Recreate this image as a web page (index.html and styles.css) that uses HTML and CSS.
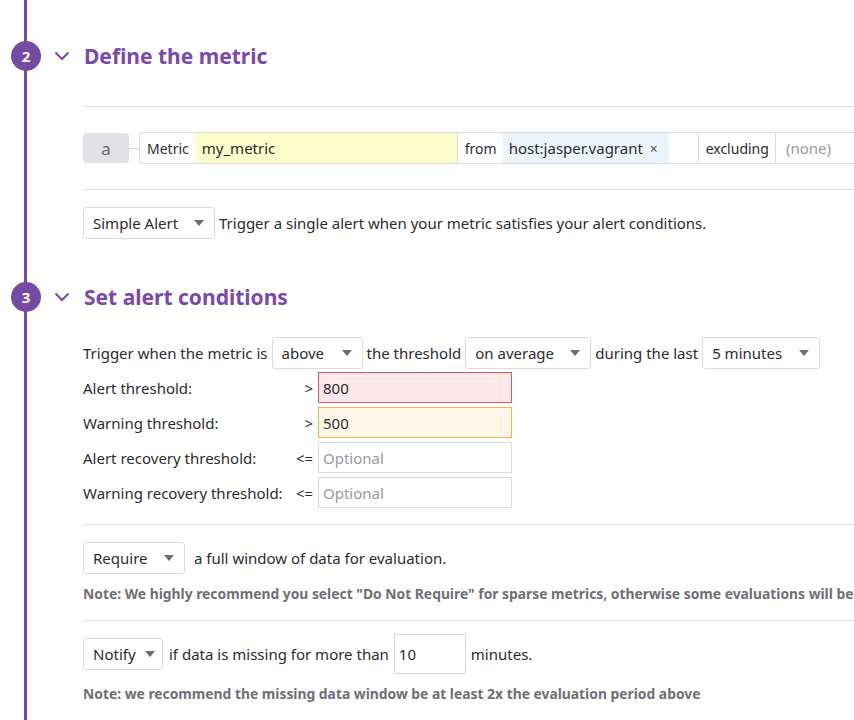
FILE: index.html
```html
<!DOCTYPE html>
<html>
<head>
<meta charset="utf-8">
<link rel="stylesheet" href="styles.css">
</head>
<body>
<div class="page">
  <section class="step step-2">
    <div class="step-head">
      <span class="badge">2</span>
      <svg class="chev" width="16" height="10" viewBox="0 0 16 10"><path d="M1.5 1.5 L8 8 L14.5 1.5" fill="none" stroke="#7a4aa8" stroke-width="2"/></svg>
      <h2>Define the metric</h2>
    </div>
    <hr class="sep sep-top">
    <div class="query">
      <span class="qname">a</span>
      <span class="qlink"></span>
      <div class="qgroup">
        <span class="qlabel">Metric</span>
        <span class="qfield metric">my_metric</span>
        <span class="qlabel">from</span>
        <span class="qfield host">host:jasper.vagrant <span class="x">×</span></span>
        <span class="qfield blank"></span>
        <span class="qlabel">excluding</span>
        <span class="qfield none">(none)</span>
      </div>
    </div>
    <hr class="sep">
    <div class="line">
      <span class="select w-simple">Simple Alert<i class="caret"></i></span>
      <span>Trigger a single alert when your metric satisfies your alert conditions.</span>
    </div>
  </section>

  <section class="step step-3">
    <div class="step-head">
      <span class="badge">3</span>
      <svg class="chev" width="16" height="10" viewBox="0 0 16 10"><path d="M1.5 1.5 L8 8 L14.5 1.5" fill="none" stroke="#7a4aa8" stroke-width="2"/></svg>
      <h2>Set alert conditions</h2>
    </div>
    <div class="line trigger">
      <span>Trigger when the metric is</span>
      <span class="select w-above">above<i class="caret"></i></span>
      <span>the threshold</span>
      <span class="select w-avg">on average<i class="caret"></i></span>
      <span>during the last</span>
      <span class="select w-min">5 minutes<i class="caret"></i></span>
    </div>
    <div class="thresholds">
      <span class="tlabel">Alert threshold:</span><span class="op">&gt;</span><span class="tinput alert">800</span>
      <span class="tlabel">Warning threshold:</span><span class="op">&gt;</span><span class="tinput warn">500</span>
      <span class="tlabel">Alert recovery threshold:</span><span class="op">&lt;=</span><span class="tinput ph">Optional</span>
      <span class="tlabel">Warning recovery threshold:</span><span class="op">&lt;=</span><span class="tinput ph">Optional</span>
    </div>
    <hr class="sep sep-req">
    <div class="line">
      <span class="select w-req">Require<i class="caret"></i></span>
      <span class="pad">a full window of data for evaluation.</span>
    </div>
    <p class="note">Note: We highly recommend you select "Do Not Require" for sparse metrics, otherwise some evaluations will be</p>
    <hr class="sep sep-notify">
    <div class="line notify">
      <span class="select w-notify">Notify<i class="caret"></i></span>
      <span class="after-notify">if data is missing for more than</span>
      <span class="num">10</span>
      <span>minutes.</span>
    </div>
    <p class="note">Note: we recommend the missing data window be at least 2x the evaluation period above</p>
  </section>
</div>
</body>
</html>
```

FILE: styles.css
```css
* { box-sizing: border-box; }
html, body { margin: 0; padding: 0; background: #fff; }
body {
  font-family: "Noto Sans", "Open Sans", sans-serif;
  font-size: 15px;
  color: #2c2c30;
  overflow: hidden;
  width: 854px;
  height: 720px;
}
.page {
  position: relative;
  padding-left: 83px;
  height: 720px;
  overflow: hidden;
  white-space: nowrap;
}
.page::before {
  content: "";
  position: absolute;
  left: 24px;
  top: 0;
  bottom: 0;
  width: 3px;
  background: #774aa4;
}
.step-head {
  position: relative;
  display: flex;
  align-items: center;
  height: 30px;
  margin-left: -29px;
}
.step-2 .step-head { margin-top: 41px; }
.step-3 .step-head { margin-top: 43px; }
.badge {
  position: absolute;
  left: -43px;
  top: 0;
  width: 30px;
  height: 30px;
  border-radius: 50%;
  background: #774aa4;
  color: #fff;
  font-weight: 700;
  font-size: 15px;
  display: flex;
  align-items: center;
  justify-content: center;
}
.chev { margin-right: 14px; }
h2 {
  margin: 0;
  font-size: 21px;
  font-weight: 700;
  color: #7b49ab;
  line-height: 30px;
}
.sep {
  border: 0;
  border-top: 1px solid #dedee3;
  margin: 0;
}
.sep-top { margin-top: 35px; }
.query {
  display: flex;
  align-items: center;
  margin: 25px 0 25px;
}
.qname {
  width: 46px;
  height: 30px;
  background: #e1e1e6;
  border-radius: 4px;
  color: #6b6b70;
  font-size: 17px;
  display: flex;
  align-items: center;
  justify-content: center;
}
.qlink { width: 10px; height: 1px; background: #d4d4d9; }
.qgroup {
  display: flex;
  border: 1px solid #dcdce0;
  border-right: 0;
  border-radius: 3px 0 0 3px;
  height: 32px;
  flex: 1;
  overflow: hidden;
}
.qlabel {
  display: flex;
  align-items: center;
  padding: 0 6px 0 7px;
  font-size: 14px;
  color: #2c2c30;
  border-left: 1px solid #dcdce0;
}
.qlabel:first-child { border-left: 0; }
.qfield {
  display: flex;
  align-items: center;
  padding: 0 7px;
  border-left: 1px solid #dcdce0;
  font-size: 15px;
}
.qfield.metric { background: #fdfdcb; width: 262px; border-left: 0; }
.qfield.host { background: #eaf4fa; width: 166px; border-left: 0; padding-left: 6px; }
.qfield.blank { width: 29px; border-left: 0; }
.qfield.none { color: #9a9aa0; padding-left: 10px; flex: 1; }
.x { font-size: 14px; color: #555; margin-left: 7px; }
.line {
  display: flex;
  align-items: center;
  gap: 4px;
}
.sep + .line { margin-top: 17px; }
.select {
  display: flex;
  align-items: center;
  justify-content: space-between;
  height: 32px;
  padding: 0 10px 0 9px;
  border: 1px solid #dcdce0;
  border-radius: 3px;
  background: #fff;
}
.caret {
  width: 0;
  height: 0;
  border-left: 5px solid transparent;
  border-right: 5px solid transparent;
  border-top: 6px solid #6c6c72;
}
.w-simple { width: 132px; }
.w-above { width: 91px; }
.w-avg { width: 126px; }
.w-min { width: 118px; }
.w-req { width: 102px; }
.w-notify { width: 80px; padding-right: 7px; }
.pad { margin-left: 5px; }
.trigger { margin-top: 25px; }
.thresholds {
  display: grid;
  grid-template-columns: 213px 22px 194px;
  row-gap: 4px;
  align-items: center;
  margin-top: 3px;
}
.tlabel { line-height: 30px; }
.op { text-align: right; padding-right: 5px; }
.tinput {
  height: 31px;
  border: 1px solid #dcdce0;
  display: flex;
  align-items: center;
  padding: 0 4px;
}
.tinput.alert { background: #fde9eb; border-color: #e05563; }
.tinput.warn { background: #fef6e8; border-color: #f1b64a; }
.tinput.ph { color: #9a9aa0; }
.sep-req { margin-top: 16px; }
.note {
  margin: 10px 0 0;
  font-size: 13.85px;
  font-weight: 700;
  color: #6f6f75;
  line-height: 20px;
}
.sep-notify { margin-top: 16px; }
.sep + .line.notify { margin-top: 13px; gap: 5px; }
.after-notify { margin-left: 1px; }
.num {
  width: 72px;
  height: 40px;
  border: 1px solid #dcdce0;
  display: flex;
  align-items: center;
  padding: 0 4px;
}
.notify + .note { margin-top: 10px; }
```
